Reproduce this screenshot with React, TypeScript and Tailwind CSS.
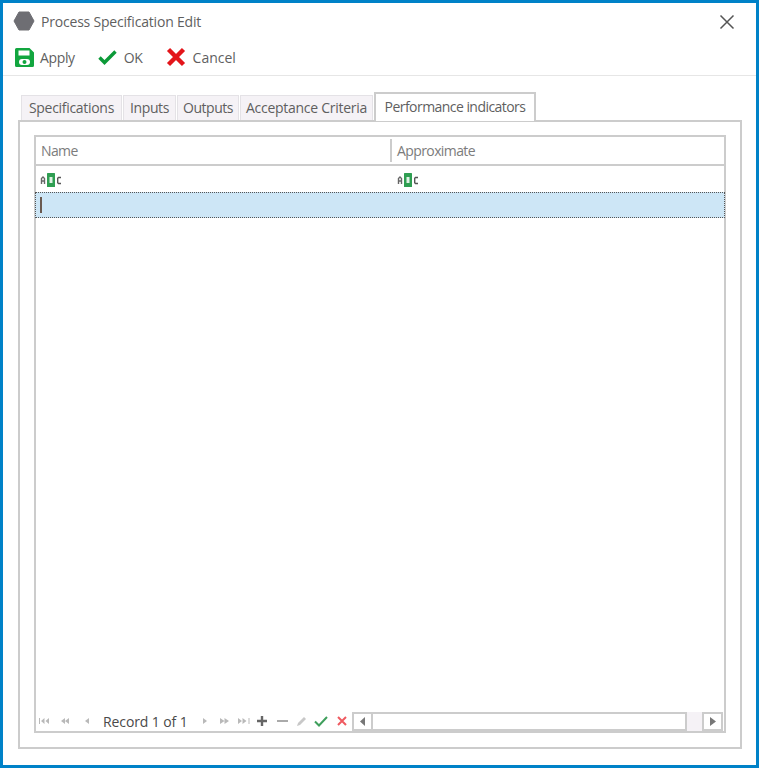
import type { ReactNode } from "react";

const tabs = [
  { label: "Specifications", width: "w-[101px]", tracking: "tracking-[-0.3px]" },
  { label: "Inputs", width: "w-[53px]", tracking: "tracking-[-0.4px]" },
  { label: "Outputs", width: "w-[62px]", tracking: "tracking-[-0.5px]" },
  { label: "Acceptance Criteria", width: "w-[133px]", tracking: "tracking-[-0.28px]" },
];

const AbcIcon = () => (
  <svg width="22" height="14" viewBox="0 0 22 14" className="block">
    <rect x="7" y="0" width="8" height="14" rx="0.5" fill="#2f9e52" />
    <rect x="9.500" y="4" width="3" height="6" fill="#dff2e4" />
    <path d="M1.500 11V5.500L3 4l1.500 1.500V11M1.500 8h3" fill="none" stroke="#666" strokeWidth="1.400" />
    <path d="M21 4.500h-2.500l-.800.800v4.400l.800.800H21" fill="none" stroke="#555" strokeWidth="1.400" />
  </svg>
);

// nav arrows of the grid footer, all share the same viewbox
const NavIcon = ({ children, className = "" }: { children: ReactNode; className?: string }) => (
  <svg width="14" height="14" viewBox="0 0 14 14" className={`block shrink-0 ${className}`}>
    {children}
  </svg>
);

const gray = "#b9b9b9";

export default function App() {
  return (
    <div className="w-[759px] h-[768px] border-[3px] border-[#0082c8] bg-white flex flex-col font-['Open_Sans',sans-serif] text-[#5f5f5f]">
      {/* title bar */}
      <div className="h-[36px] shrink-0 flex items-center pl-[10px] pr-[21px]">
        <svg width="22" height="20" viewBox="0 0 22 20" className="block">
          <path d="M6 1h10l5 9-5 9H6l-5-9z" fill="#6e6e73" stroke="#6e6e73" strokeLinejoin="round" />
        </svg>
        <span className="ml-[6px] text-[14px] tracking-[-0.2px]">Process Specification Edit</span>
        <svg width="16" height="16" viewBox="0 0 16 16" className="block ml-auto mt-px">
          <path d="M1.500 1.500l13 13M14.500 1.500l-13 13" stroke="#555" strokeWidth="1.500" fill="none" />
        </svg>
      </div>

      {/* toolbar */}
      <div className="h-[37px] shrink-0 flex items-center pl-[12px] border-b border-[#e6e6e6] text-[14px] tracking-[-0.35px]">
        <svg width="19" height="19" viewBox="0 0 19 19" className="block">
          <path d="M1.500 0h13L19 4.500v13a1.500 1.500 0 0 1-1.500 1.500h-16A1.500 1.500 0 0 1 0 17.500v-16A1.500 1.500 0 0 1 1.500 0z" fill="#12a63f" />
          <rect x="3.500" y="2.500" width="11" height="5" fill="#fff" />
          <rect x="4" y="11" width="11" height="6" rx="3" fill="#fff" />
          <circle cx="9.500" cy="14" r="2" fill="#12a63f" />
        </svg>
        <span className="ml-[6px]">Apply</span>
        <svg width="19" height="16" viewBox="0 0 19 16" className="block ml-[23px]">
          <path d="M1.500 8.500l5 5L17.500 2.500" fill="none" stroke="#0c9a38" strokeWidth="3.400" />
        </svg>
        <span className="ml-[7px]">OK</span>
        <svg width="20" height="20" viewBox="0 0 20 20" className="block ml-[23px]">
          <path d="M2.500 2.500l15 15M17.500 2.500l-15 15" fill="none" stroke="#e3151a" strokeWidth="4.400" />
        </svg>
        <span className="ml-[7px] tracking-[0px]">Cancel</span>
      </div>

      {/* tabs */}
      <div className="flex-1 flex flex-col pl-[15px] pr-[14px] pt-[16px] pb-[16px] min-h-0">
        <div className="h-[28px] shrink-0 flex items-end pl-[3px] relative z-10 text-[14px]">
          {tabs.map((tab) => (
            <div
              key={tab.label}
              className={`${tab.width} ${tab.tracking} h-[25px] shrink-0 mr-px bg-[#f5f2f6] border-t border-x border-[#e4e2e6] flex items-center justify-center pb-[2px]`}
            >
              {tab.label}
            </div>
          ))}
          <div className="w-[162px] h-[29px] -mb-px shrink-0 bg-white border-t-2 border-x-2 border-[#cccccc] flex items-center justify-center pb-[2px] tracking-[-0.55px]">
            Performance indicators
          </div>
        </div>

        {/* tab page */}
        <div className="flex-1 min-h-0 border-2 border-[#cccccc] pt-[13px] pb-[14px] px-[14px] flex">
          <div className="flex-1 border-2 border-[#cccccc] flex flex-col min-w-0">
            <div className="h-[29px] shrink-0 flex items-center border-b-2 border-[#cccccc] text-[14px] tracking-[-0.6px] text-[#7c7c7c]">
              <div className="w-[354px] pl-[5px]">Name</div>
              <div className="w-[2px] h-[23px] bg-[#cccccc]" />
              <div className="pl-[5px]">Approximate</div>
            </div>
            <div className="h-[26px] shrink-0 flex items-center pt-[2px]">
              <div className="w-[356px] pl-[4px]">
                <AbcIcon />
              </div>
              <div className="pl-[5px]">
                <AbcIcon />
              </div>
            </div>
            <div className="h-[26px] shrink-0 -mx-px bg-[#cde6f6] border border-dotted border-[#555] flex items-center pl-[4px]">
              <div className="w-[2px] h-[16px] bg-[#6a5a50]" />
            </div>
            <div className="flex-1" />

            {/* footer navigator */}
            <div className="h-[22px] shrink-0 flex items-center pl-px pt-[2px] text-[14px] tracking-[-0.1px]">
              <NavIcon>
                <path d="M2 4v6h1V4zM4 7l3.500-3v6zM8.500 7L12 4v6z" fill={gray} />
              </NavIcon>
              <NavIcon className="ml-[7px]">
                <path d="M3 7l4-3v6zM7 7l4-3v6z" fill={gray} />
              </NavIcon>
              <NavIcon className="ml-[7px]">
                <path d="M10 4v6L6 7z" fill={gray} />
              </NavIcon>
              <span className="ml-[10px] w-[94px] shrink-0 text-[#4a4a4a]">Record 1 of 1</span>
              <NavIcon>
                <path d="M6 4v6l4-3z" fill={gray} />
              </NavIcon>
              <NavIcon className="ml-[7px]">
                <path d="M2 4v6l4.500-3zM6.500 4v6L11 7z" fill={gray} />
              </NavIcon>
              <NavIcon className="ml-[5px]">
                <path d="M1 4v6l4-3zM5.500 4v6l4-3zM11.500 4v6h1V4z" fill={gray} />
              </NavIcon>
              <NavIcon className="ml-[4px]">
                <path d="M7 2v10M2 7h10" stroke="#666" strokeWidth="2.400" fill="none" />
              </NavIcon>
              <NavIcon className="ml-[6px]">
                <path d="M2 7h11" stroke="#aaa" strokeWidth="2" fill="none" />
              </NavIcon>
              <NavIcon className="ml-[6px]">
                <path d="M2 12l1-3 6-6 2 2-6 6z" fill="#c8c8c8" />
              </NavIcon>
              <NavIcon className="ml-[5px]">
                <path d="M1 7.500l4 4L13 3" stroke="#3f9f5c" strokeWidth="2" fill="none" />
              </NavIcon>
              <NavIcon className="ml-[7px]">
                <path d="M3 3l8 8M11 3l-8 8" stroke="#ef5a60" strokeWidth="2" fill="none" />
              </NavIcon>

              {/* scrollbar */}
              <div className="flex-1 h-[19px] ml-[3px] mr-px flex items-center min-w-0">
                <div className="w-[21px] h-full shrink-0 border-2 border-[#cccccc] flex items-center justify-center">
                  <svg width="6" height="9" viewBox="0 0 6 9" className="block">
                    <path d="M5 0v9L0 4.500z" fill="#777" />
                  </svg>
                </div>
                <div className="w-[314px] h-full shrink-0 border-y-2 border-r-2 border-[#cccccc]" />
                <div className="flex-1 h-full bg-[#f5f2f6]" />
                <div className="w-[21px] h-full shrink-0 border-2 border-[#cccccc] flex items-center justify-center">
                  <svg width="6" height="9" viewBox="0 0 6 9" className="block">
                    <path d="M0 0v9l6-4.500z" fill="#777" />
                  </svg>
                </div>
              </div>
            </div>
          </div>
        </div>
      </div>
    </div>
  );
}
